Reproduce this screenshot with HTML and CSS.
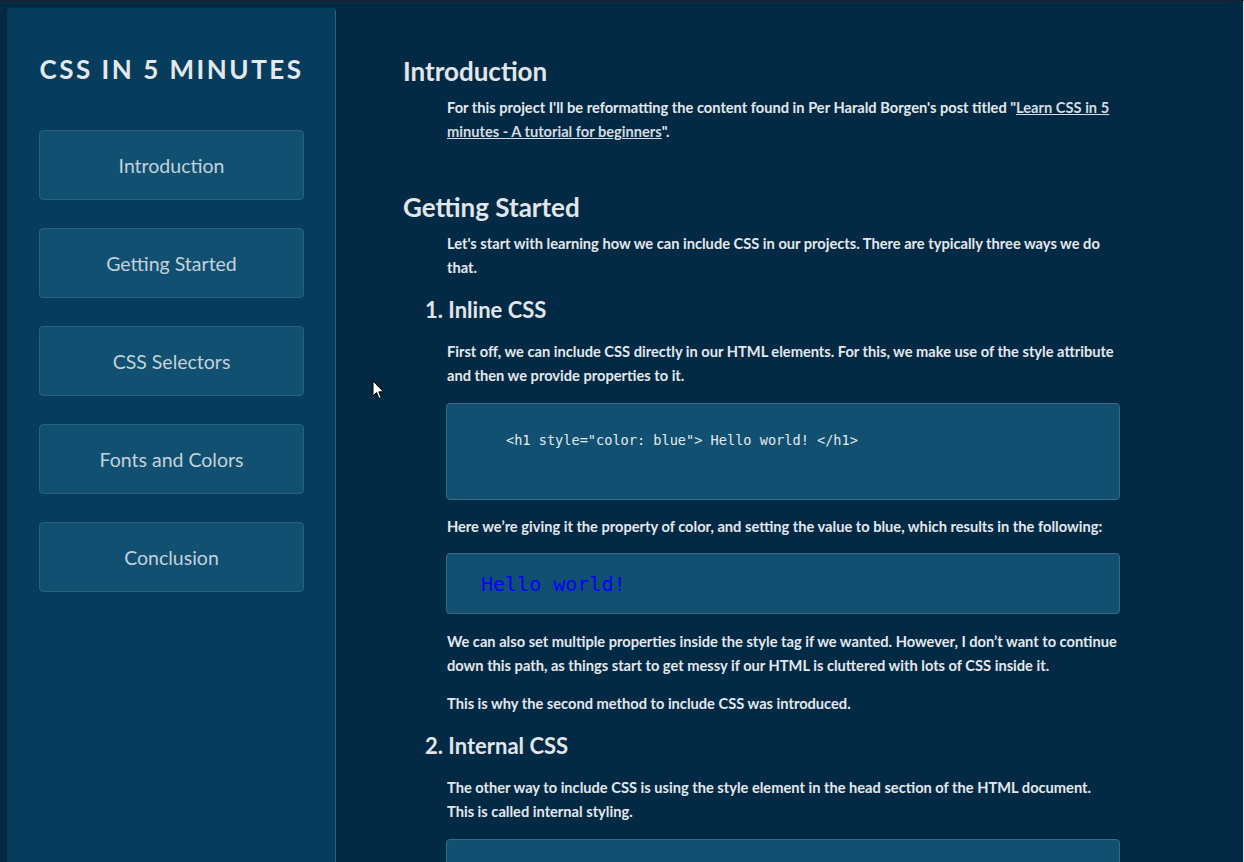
FILE: index.html
```html
<!DOCTYPE html>
<html lang="en">
<head>
<meta charset="utf-8">
<title>CSS in 5 Minutes</title>
<link rel="stylesheet" href="styles.css">
</head>
<body>
<div class="page">
  <nav class="sidebar">
    <h1 class="site-title">CSS IN 5 MINUTES</h1>
    <ul class="nav-list">
      <li><a class="nav-link" href="#introduction">Introduction</a></li>
      <li><a class="nav-link" href="#getting-started">Getting Started</a></li>
      <li><a class="nav-link" href="#css-selectors">CSS Selectors</a></li>
      <li><a class="nav-link" href="#fonts-and-colors">Fonts and Colors</a></li>
      <li><a class="nav-link" href="#conclusion">Conclusion</a></li>
    </ul>
  </nav>
  <main class="content">
    <section class="section section-intro" id="introduction">
      <h2 class="section-title">Introduction</h2>
      <p class="text">For this project I'll be reformatting the content found in Per Harald Borgen's post titled "<a class="text-link" href="#">Learn CSS in 5 minutes - A tutorial for beginners</a>".</p>
    </section>
    <section class="section" id="getting-started">
      <h2 class="section-title">Getting Started</h2>
      <p class="text">Let's start with learning how we can include CSS in our projects. There are typically three ways we do that.</p>
      <h3 class="sub-title">1. Inline CSS</h3>
      <p class="text">First off, we can include CSS directly in our HTML elements. For this, we make use of the style attribute and then we provide properties to it.</p>
      <pre class="code-box"><code>&lt;h1 style="color: blue"&gt; Hello world! &lt;/h1&gt;</code></pre>
      <p class="text">Here we’re giving it the property of color, and setting the value to blue, which results in the following:</p>
      <div class="demo-box"><span class="demo-text">Hello world!</span></div>
      <p class="text">We can also set multiple properties inside the style tag if we wanted. However, I don’t want to continue down this path, as things start to get messy if our HTML is cluttered with lots of CSS inside it.</p>
      <p class="text">This is why the second method to include CSS was introduced.</p>
      <h3 class="sub-title">2. Internal CSS</h3>
      <p class="text">The other way to include CSS is using the style element in the head section of the HTML document. This is called internal styling.</p>
      <pre class="code-box"><code>&lt;head&gt;</code></pre>
    </section>
  </main>
</div>
<svg class="cursor" width="14" height="22" viewBox="0 0 14 22" aria-hidden="true">
  <path d="M1 1 L1 16 L4.5 12.5 L7 18.5 L9.2 17.6 L6.8 11.8 L11.5 11.8 Z" fill="#ffffff" stroke="#000000" stroke-width="1" stroke-linejoin="miter"/>
</svg>
</body>
</html>
```
FILE: styles.css
```css
html, body {
  margin: 0;
  padding: 0;
}
body {
  background: #032a44;
  border-top: 1px solid #1d2226;
  border-right: 1px solid #dfe4e8;
  height: 861px;
  overflow: hidden;
  font-family: Lato, "Open Sans", sans-serif;
  color: #e4e8ec;
  position: relative;
}
.page {
  display: flex;
  align-items: stretch;
  padding: 7px 0 0 7px;
  min-height: 900px;
}
.sidebar {
  flex: 0 0 329px;
  width: 329px;
  background: #063c5c;
  border-right: 1px solid #2d6181;
  border-radius: 4px 4px 0 0;
  padding: 0 31px 0 32px;
  box-sizing: border-box;
}
.site-title {
  margin: 45px 0 0;
  text-align: center;
  font-size: 26px;
  line-height: 32px;
  font-weight: 700;
  letter-spacing: 2.5px;
  color: #e4e8ec;
  white-space: nowrap;
}
.nav-list {
  list-style: none;
  margin: 45px 0 0;
  padding: 0;
  display: flex;
  flex-direction: column;
  gap: 28px;
}
.nav-link {
  display: flex;
  align-items: center;
  justify-content: center;
  height: 70px;
  box-sizing: border-box;
  background: #115070;
  border: 1px solid #2b5f7e;
  border-radius: 4px;
  color: #c3d2dd;
  font-size: 19.5px;
  text-decoration: none;
}
.content {
  flex: 1;
  padding: 47px 0 0 67px;
}
.section-title {
  margin: 0 0 9px;
  font-size: 26px;
  line-height: 32px;
  font-weight: 700;
  color: #e2e6ea;
}
.section-intro {
  margin-bottom: 47px;
}
.text {
  margin: 14px 0 14px 44px;
  width: 673px;
  font-size: 14.65px;
  line-height: 24px;
  font-weight: 700;
  color: #e4e8ec;
}
.section-title + .text {
  margin-top: 0;
}
.section-intro .text {
  margin-bottom: 0;
}
.text-link {
  color: #d6dce1;
  text-decoration: underline;
}
.sub-title {
  margin: 16px 0 16px 22px;
  font-size: 22px;
  line-height: 28px;
  font-weight: 700;
  color: #e2e6ea;
}
.code-box {
  margin: 15px 0 15px 43px;
  width: 674px;
  height: 97px;
  box-sizing: border-box;
  padding: 27px 0 0 59px;
  background: #115070;
  border: 1px solid #3b6a88;
  border-radius: 4px;
  font-family: "DejaVu Sans Mono", "Liberation Mono", monospace;
  font-size: 13.6px;
  line-height: 18px;
  color: #e6eaee;
}
.demo-box {
  margin: 14px 0 16px 43px;
  width: 674px;
  height: 61px;
  box-sizing: border-box;
  padding: 0 0 0 34px;
  display: flex;
  align-items: center;
  background: #115070;
  border: 1px solid #3b6a88;
  border-radius: 4px;
}
.demo-text {
  font-family: "DejaVu Sans Mono", "Liberation Mono", monospace;
  font-size: 20px;
  color: #0000ff;
  padding-top: 1px;
}
.cursor {
  position: absolute;
  left: 372px;
  top: 379px;
}
```
